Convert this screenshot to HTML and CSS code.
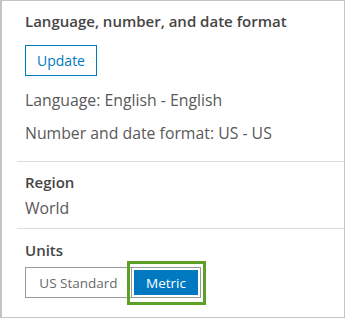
FILE: index.html
```html
<!DOCTYPE html>
<html lang="en">
<head>
<meta charset="utf-8">
<link rel="stylesheet" href="styles.css">
</head>
<body>
<div class="panel">
  <section class="sec sec-first">
    <h2 class="title">Language, number, and date format</h2>
    <button class="btn-outline" type="button">Update</button>
    <p class="info info-lang">Language: English - English</p>
    <p class="info info-num">Number and date format: US - US</p>
  </section>
  <section class="sec sec-region">
    <h2 class="title">Region</h2>
    <p class="info info-world">World</p>
  </section>
  <section class="sec sec-units">
    <h2 class="title">Units</h2>
    <div class="segmented">
      <button class="seg-item" type="button">US Standard</button>
      <button class="seg-item seg-active" type="button">Metric<span class="highlight"></span></button>
    </div>
  </section>
</div>
</body>
</html>
```
FILE: styles.css
```css
* { box-sizing: border-box; }
html, body { margin: 0; padding: 0; background: #fff; }
body { font-family: "Open Sans", "Noto Sans", sans-serif; color: #4a4a4a; }

.panel {
  width: 345px;
  height: 318px;
  border: 1px solid #c4c4c4;
  border-left-width: 2px;
  background: #fff;
}

.sec {
  margin-left: 15px;
  padding-left: 8px;
}
.sec-first { padding-top: 10px; padding-bottom: 18px; }
.sec-region { border-top: 1px solid #dcdcdc; padding-top: 10px; padding-bottom: 10px; }
.sec-units { border-top: 1px solid #dcdcdc; padding-top: 11px; }

.title {
  margin: 0;
  font-size: 15px;
  line-height: 20px;
  font-weight: 600;
  color: #454545;
}

.info {
  margin: 0;
  font-size: 15.8px;
  line-height: 20px;
  color: #595959;
}
.info-lang { margin-top: 14px; }
.info-num { margin-top: 13px; }
.info-world { margin-top: 6px; }

.btn-outline {
  display: block;
  margin-top: 14px;
  width: 72px;
  height: 31px;
  padding: 0;
  border: 1px solid #0079c1;
  background: #fff;
  color: #0079c1;
  font-family: inherit;
  font-size: 14px;
}

.segmented {
  display: flex;
  margin-top: 7px;
}
.seg-item {
  height: 31px;
  padding: 0;
  font-family: inherit;
  font-size: 13.5px;
  background: #fff;
  color: #6a6a6a;
  border: 1px solid #9a9a9a;
}
.seg-item:first-child {
  width: 106px;
  border-right: none;
}
.seg-active {
  position: relative;
  width: 70px;
  background: #0079c1;
  color: #fff;
  box-shadow: inset 0 0 0 2px #fff;
}
.highlight {
  position: absolute;
  top: -7px;
  left: -5px;
  right: -6px;
  bottom: -8px;
  border: 3px solid #5da028;
}
```
